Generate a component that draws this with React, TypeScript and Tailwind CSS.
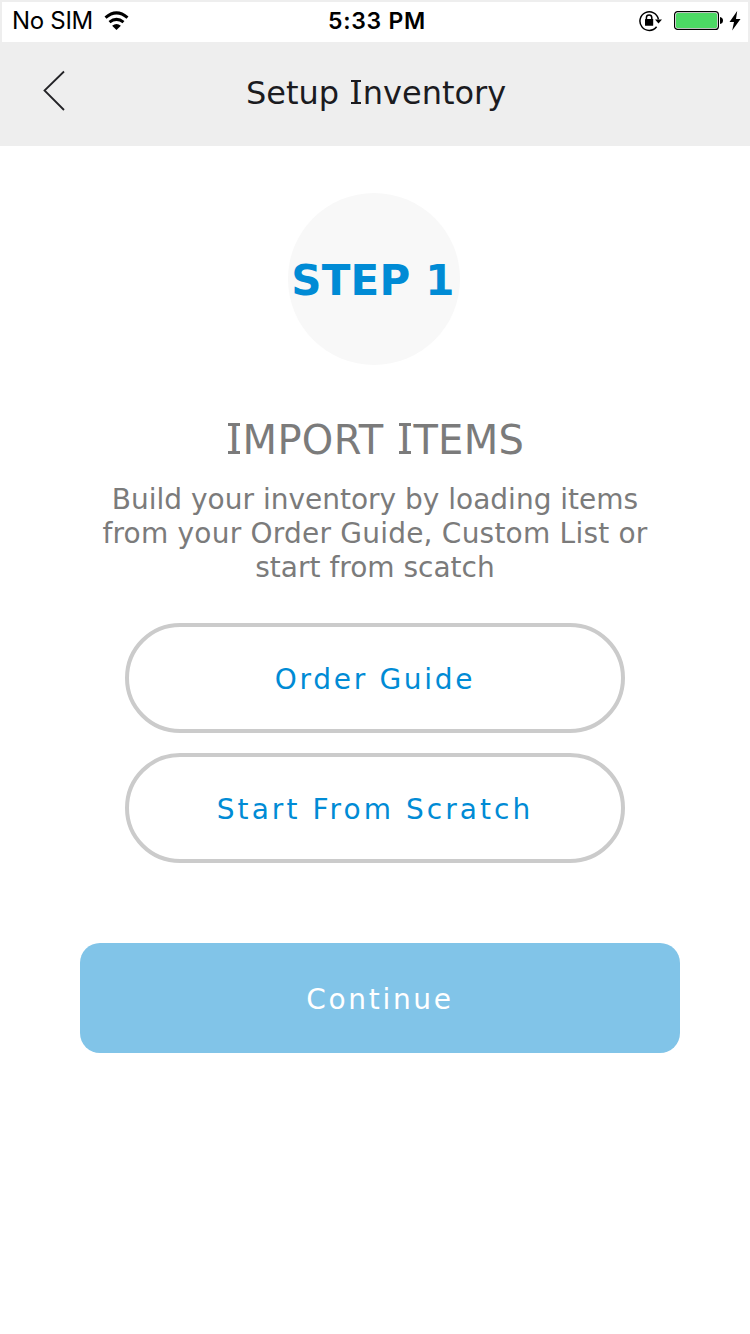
function WifiIcon() {
  return (
    <svg className="-mt-0.5" width="26" height="20" viewBox="0 0 26 20">
      <path d="M1.5 6.6Q12.5-2.8 23.5 6.6M5.5 11.2Q12.5 5.6 19.5 11.2" fill="none" stroke="black" strokeWidth="3" />
      <path d="M12.5 19 8.1 14.8Q12.5 11 16.9 14.8Z" />
    </svg>
  );
}

function RotationLockIcon() {
  return (
    <svg width="24" height="22" viewBox="0 0 24 22">
      <path d="M17.6 16.8A9.3 9.3 0 1 1 19.4 9.4" fill="none" stroke="black" strokeWidth="1.5" />
      <path d="M16 9.4h7L19.5 13.4Z" />
      <path d="M7.4 10V7.8a2.7 2.7 0 0 1 5.4 0V10" fill="none" stroke="black" strokeWidth="1.5" />
      <rect x="6" y="9" width="8.2" height="6.8" rx="0.6" />
    </svg>
  );
}

function BatteryIcon() {
  return (
    <svg width="50" height="20" viewBox="0 0 50 20">
      <rect x="0.6" y="0.6" width="43.8" height="17.8" rx="3" fill="white" stroke="black" strokeWidth="1.2" />
      <rect x="2" y="2" width="41" height="15" rx="1.5" fill="#4cd964" />
      <path d="M46 6Q49 6.5 49 9.5Q49 12.5 46 13Z" />
    </svg>
  );
}

function ChargingIcon() {
  return (
    <svg width="12" height="20" viewBox="0 0 12 20">
      <path d="M8.2 0 0.5 11H5L3.2 19.4 11.5 8H7Z" />
    </svg>
  );
}

// Capital I with slab serifs drawn over the ends of its stem.
function SlabI() {
  return (
    <span className="relative inline-block w-[0.421em] text-center leading-none tracking-normal before:absolute before:top-[0.085em] before:left-[0.06em] before:h-[0.072em] before:w-[0.3em] before:bg-current before:content-[''] after:absolute after:bottom-[0.154em] after:left-[0.06em] after:h-[0.072em] after:w-[0.3em] after:bg-current after:content-['']">
      I
    </span>
  );
}

export default function App() {
  return (
    <main className="flex h-[1334px] w-[750px] flex-col bg-white font-['Verdana','DejaVu_Sans',sans-serif]">
      <header className="flex h-[42px] items-center border-2 border-b-0 border-[#eee] pr-[7px] pl-2.5 font-['Inter',sans-serif] text-black">
        <div className="flex flex-1 items-center gap-[11px] text-[24px]">
          <span className="-mt-0.5 tracking-[-0.3px]">No SIM</span>
          <WifiIcon />
        </div>
        <span className="-mt-0.5 -mr-px text-[23px] font-semibold tracking-[0.75px]">5:33 PM</span>
        <div className="flex flex-1 items-center justify-end pb-0.5">
          <RotationLockIcon />
          <span className="ml-[11px] flex"><BatteryIcon /></span>
          <span className="ml-[5px] flex"><ChargingIcon /></span>
        </div>
      </header>
      <nav className="flex h-[104px] items-center bg-[#eee] pb-0.5">
        <svg className="-mt-1 ml-[43px]" width="22" height="42" viewBox="0 0 22 42">
          <path d="M21 1.5 1.5 20.5 21 40" fill="none" stroke="#222226" strokeWidth="1.8" />
        </svg>
        <h1 className="ml-[181px] text-[32px] text-[#1b1b1f]">Setup <SlabI />nventory</h1>
      </nav>
      <section className="flex flex-col items-center pt-[47px]">
        <div className="mr-0.5 flex size-[172px] items-center justify-center rounded-full bg-[#f8f8f8] pt-0.5 text-[42px] font-bold text-[#008bd5]">
          <span className="mr-0.5 tracking-[0.2px] whitespace-nowrap">STEP 1</span>
        </div>
        <h2 className="mt-[45px] text-[40px] leading-[60px] tracking-[0.3px] text-[#7b7b7b]"><SlabI />MPORT <SlabI />TEMS</h2>
        <p className="mt-[13px] text-center text-[28px] leading-[34px] text-[#7b7b7b]">
          Build your inventory by loading items
          <br />
          <span className="tracking-[0.22px]">from your Order Guide, Custom List or</span>
          <br />
          start from scatch
        </p>
        <div className="mt-[38px] flex w-[500px] flex-col gap-5">
          <button className="h-[110px] rounded-full border-4 border-[#cbcbcb] pt-1 text-[28px] tracking-[2.7px] text-[#008bd5]">Order Guide</button>
          <button className="h-[110px] rounded-full border-4 border-[#cbcbcb] pt-1 text-[28px] tracking-[3.05px] text-[#008bd5]">Start From Scratch</button>
        </div>
        <button className="mt-20 ml-2.5 h-[110px] w-[600px] rounded-[20px] bg-[#81c4e8] pt-1 text-[28px] tracking-[2.7px] text-white">Continue</button>
      </section>
    </main>
  );
}
